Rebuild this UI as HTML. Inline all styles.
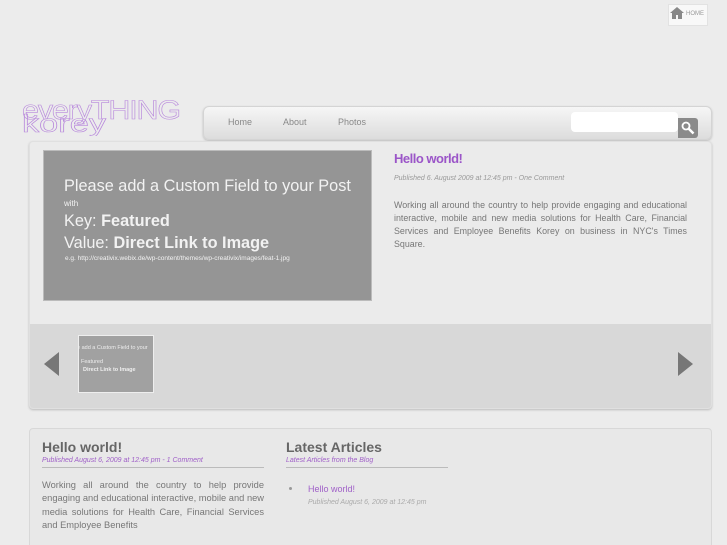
<!DOCTYPE html>
<html style="width:727px;height:545px;overflow:hidden"><head><style>
body{margin:0;width:727px;height:545px;overflow:hidden;background:#ececec;font-family:"Liberation Sans",sans-serif;position:relative}
.a{position:absolute}
</style></head><body>
<div class="a" style="left:668px;top:4px;width:38px;height:20px;background:#f8f8f8;border:1px solid #e2e2e2"></div>
<svg class="a" style="left:670px;top:7px" width="14" height="12" viewBox="0 0 14 12"><path d="M7 0L0 6h2v6h4V8h2v4h4V6h2z" fill="#888"/></svg>
<div class="a" style="left:686px;top:11px;font-size:6px;color:#999">HOME</div>

<svg class="a" style="left:20px;top:94px" width="170" height="42">
<text x="2" y="25" font-family="Liberation Sans" font-size="27" fill="none" stroke="#b888dc" stroke-width="0.6" letter-spacing="-1" textLength="158" lengthAdjust="spacingAndGlyphs">everyTHING</text>
<text x="2" y="38" font-family="Liberation Sans" font-size="25" fill="none" stroke="#b888dc" stroke-width="0.6" textLength="84" lengthAdjust="spacingAndGlyphs">korey</text>
</svg>

<div class="a" style="left:203px;top:106px;width:507px;height:32px;border:1px solid #d4d4d4;border-radius:6px;background:linear-gradient(#f6f6f6,#dcdcdc);box-shadow:0 1px 2px #bbb"></div>
<div class="a" style="left:228px;top:117px;font-size:9px;color:#888">Home</div>
<div class="a" style="left:283px;top:117px;font-size:9px;color:#888">About</div>
<div class="a" style="left:338px;top:117px;font-size:9px;color:#888">Photos</div>
<div class="a" style="left:571px;top:112px;width:107px;height:20px;background:#fff;border-radius:4px"></div>
<div class="a" style="left:678px;top:118px;width:20px;height:20px;background:#8a8a8a;border-radius:0 3px 3px 0"></div>
<svg class="a" style="left:680px;top:120px" width="16" height="16"><circle cx="6" cy="6" r="3.5" fill="none" stroke="#fff" stroke-width="1.8"/><path d="M8.5 8.5l5 5" stroke="#fff" stroke-width="2.5"/></svg>

<div class="a" style="left:29px;top:141px;width:681px;height:266px;background:#ebebeb;border:1px solid #e0e0e0;border-radius:4px;box-shadow:0 1px 2px #bbb;overflow:hidden">
<div class="a" style="left:0;top:182px;width:681px;height:84px;background:#d8d8d8"></div>
</div>
<div class="a" style="left:43px;top:150px;width:327px;height:149px;background:#959595;border:1px solid #bbb;color:#f2f2f2">
<div class="a" style="left:20px;top:26px;font-size:16.3px">Please add a Custom Field to your Post</div>
<div class="a" style="left:20px;top:48px;font-size:8px">with</div>
<div class="a" style="left:20px;top:61px;font-size:16.3px">Key: <b>Featured</b></div>
<div class="a" style="left:20px;top:83px;font-size:16.3px">Value: <b>Direct Link to Image</b></div>
<div class="a" style="left:21px;top:104px;font-size:6.5px;white-space:nowrap">e.g. http://creativix.webix.de/wp-content/themes/wp-creativix/images/feat-1.jpg</div>
</div>
<svg class="a" style="left:42px;top:352px" width="20" height="24"><path d="M17 0L2 12l15 12z" fill="#777"/></svg>
<svg class="a" style="left:676px;top:352px" width="20" height="24"><path d="M2 0l15 12L2 24z" fill="#777"/></svg>
<div class="a" style="left:78px;top:335px;width:74px;height:56px;background:#a1a1a1;border:1px solid #eee;overflow:hidden;color:#eee;font-size:5.5px">
<div class="a" style="left:-2px;top:9px;white-space:nowrap">e add a Custom Field to your</div>
<div class="a" style="left:2px;top:23px">Featured</div>
<div class="a" style="left:4px;top:31px;white-space:nowrap;font-weight:bold">Direct Link to Image</div>
</div>

<div class="a" style="left:394px;top:151px;font-size:13px;font-weight:bold;color:#9b55c8;letter-spacing:-0.5px">Hello world!</div>
<div class="a" style="left:394px;top:175px;font-size:7px;font-style:italic;color:#999">Published 6. August 2009 at 12:45 pm - One Comment</div>
<div class="a" style="left:394px;top:199px;width:293px;font-size:8.9px;line-height:13px;color:#777;text-align:justify">Working all around the country to help provide engaging and educational interactive, mobile and new media solutions for Health Care, Financial Services and Employee Benefits Korey on business in NYC's Times Square.</div>

<div class="a" style="left:29px;top:428px;width:681px;height:130px;background:#e8e8e8;border:1px solid #d8d8d8;border-radius:4px"></div>
<div class="a" style="left:42px;top:439px;font-size:14px;font-weight:bold;color:#666">Hello world!</div>
<div class="a" style="left:42px;top:457px;font-size:7px;font-style:italic;color:#a060c8">Published August 6, 2009 at 12:45 pm - 1 Comment</div>
<div class="a" style="left:42px;top:467px;width:222px;height:1px;background:#bbb"></div>
<div class="a" style="left:42px;top:479px;width:222px;font-size:9.3px;line-height:13.3px;color:#777;text-align:justify">Working all around the country to help provide engaging and educational interactive, mobile and new media solutions for Health Care, Financial Services and Employee Benefits</div>
<div class="a" style="left:286px;top:439px;font-size:14px;font-weight:bold;color:#666">Latest Articles</div>
<div class="a" style="left:286px;top:457px;font-size:7px;font-style:italic;color:#a060c8">Latest Articles from the Blog</div>
<div class="a" style="left:286px;top:467px;width:162px;height:1px;background:#bbb"></div>
<div class="a" style="left:289px;top:487px;width:3px;height:3px;border-radius:50%;background:#999"></div>
<div class="a" style="left:308px;top:484px;font-size:9px;color:#a060c8">Hello world!</div>
<div class="a" style="left:308px;top:499px;font-size:7px;font-style:italic;color:#aaa">Published August 6, 2009 at 12:45 pm</div>
</body></html>
